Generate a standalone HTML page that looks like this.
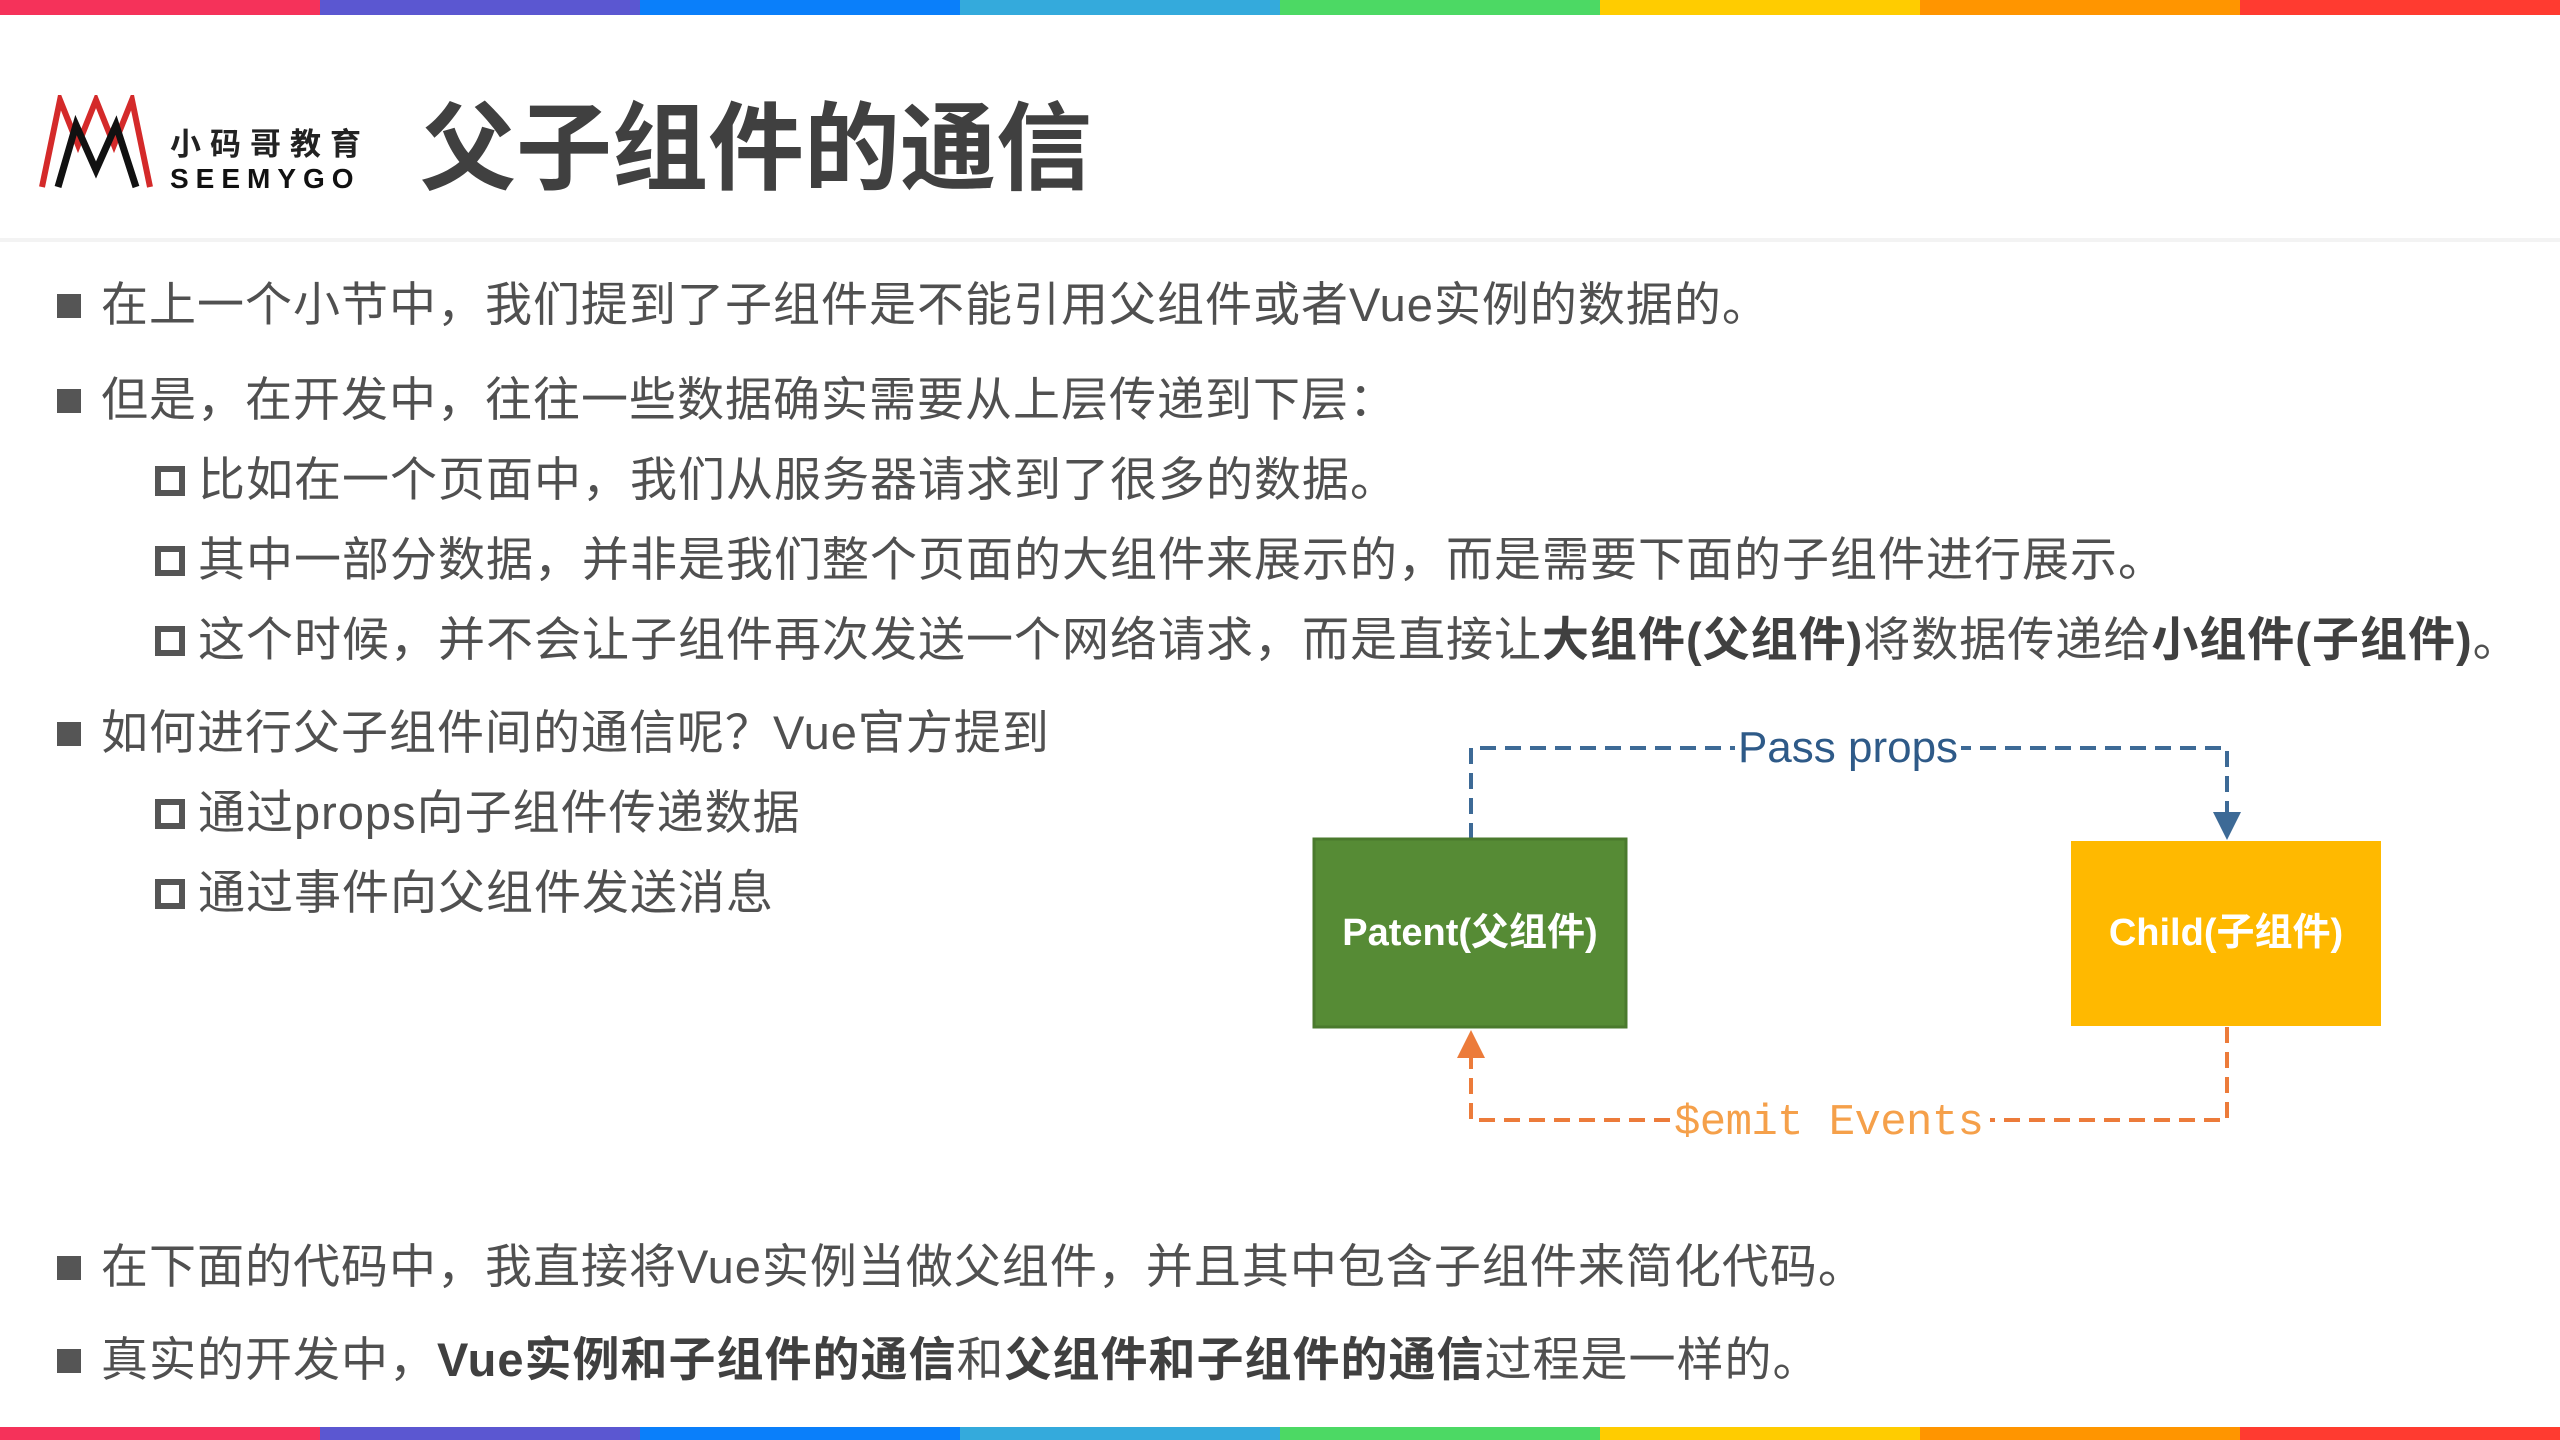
<!DOCTYPE html>
<html><head><meta charset="utf-8"><style>
*,*::before{margin:0;padding:0;box-sizing:border-box}
body{width:2560px;height:1440px;background:#fff;position:relative;overflow:hidden;font-family:"Liberation Sans","Noto Sans CJK SC",sans-serif;color:#505050}
.bar{position:absolute;left:0;width:2560px;height:15px;display:flex}
.bar div{flex:1}
.t{position:absolute;font-size:47px;line-height:60px;white-space:nowrap;letter-spacing:1px}
.b1::before{content:"";position:absolute;left:-44px;top:19px;width:24px;height:24px;background:#555}
.b2::before{content:"";position:absolute;left:-43px;top:16px;width:30px;height:30px;border:6px solid #555}
b{color:#404040;font-weight:bold}
</style></head><body>
<div class="bar" style="top:0"><div style="background:#f5325a"></div><div style="background:#5b57d1"></div><div style="background:#0a7ffa"></div><div style="background:#34aadc"></div><div style="background:#4cd964"></div><div style="background:#ffcc00"></div><div style="background:#ff9500"></div><div style="background:#ff3b30"></div></div>
<div class="bar" style="top:1427px;height:13px"><div style="background:#f5325a"></div><div style="background:#5b57d1"></div><div style="background:#0a7ffa"></div><div style="background:#34aadc"></div><div style="background:#4cd964"></div><div style="background:#ffcc00"></div><div style="background:#ff9500"></div><div style="background:#ff3b30"></div></div>

<svg style="position:absolute;left:38px;top:95px" width="130" height="100" viewBox="0 0 130 100">
<polyline points="4,92 22,5 40,50 58,5 76,50 94,5 112,92" fill="none" stroke="#d42a2a" stroke-width="6"/>
<polyline points="20,92 38,30 58,75 78,30 98,92" fill="none" stroke="#111" stroke-width="7"/>
</svg>
<div style="position:absolute;left:170px;top:128px;font-size:31px;line-height:34px;color:#222;letter-spacing:9px;font-weight:bold">小码哥教育</div>
<div style="position:absolute;left:170px;top:164px;font-size:28px;line-height:30px;color:#111;letter-spacing:7px;font-weight:bold">SEEMYGO</div>
<div style="position:absolute;left:420px;top:90px;font-size:96px;line-height:120px;font-weight:bold;color:#404040">父子组件的通信</div>
<div style="position:absolute;left:0;top:238px;width:2560px;height:4px;background:#f3f3f3"></div>

<div class="t b1" style="left:101px;top:275px">在上一个小节中，我们提到了子组件是不能引用父组件或者Vue实例的数据的。</div>
<div class="t b1" style="left:101px;top:370px">但是，在开发中，往往一些数据确实需要从上层传递到下层：</div>
<div class="t b2" style="left:198px;top:450px">比如在一个页面中，我们从服务器请求到了很多的数据。</div>
<div class="t b2" style="left:198px;top:530px">其中一部分数据，并非是我们整个页面的大组件来展示的，而是需要下面的子组件进行展示。</div>
<div class="t b2" style="left:198px;top:610px">这个时候，并不会让子组件再次发送一个网络请求，而是直接让<b>大组件(父组件)</b>将数据传递给<b>小组件(子组件)</b>。</div>
<div class="t b1" style="left:101px;top:703px">如何进行父子组件间的通信呢？Vue官方提到</div>
<div class="t b2" style="left:198px;top:783px">通过props向子组件传递数据</div>
<div class="t b2" style="left:198px;top:863px">通过事件向父组件发送消息</div>
<div class="t b1" style="left:101px;top:1237px">在下面的代码中，我直接将Vue实例当做父组件，并且其中包含子组件来简化代码。</div>
<div class="t b1" style="left:101px;top:1330px">真实的开发中，<b>Vue实例和子组件的通信</b>和<b>父组件和子组件的通信</b>过程是一样的。</div>

<svg style="position:absolute;left:0;top:0" width="2560" height="1440">
<path d="M1471 839 V748 H2227 V815" fill="none" stroke="#3d6a96" stroke-width="4" stroke-dasharray="16 9"/>
<polygon points="2213,812 2241,812 2227,840" fill="#3d6a96"/>
<path d="M2227 1027 V1120 H1471 V1058" fill="none" stroke="#ec7b3a" stroke-width="4" stroke-dasharray="16 9"/>
<polygon points="1457,1058 1485,1058 1471,1030" fill="#ec7b3a"/>
<rect x="1735" y="720" width="226" height="56" fill="#fff"/>
<text x="1848" y="762" text-anchor="middle" font-family="Liberation Sans" font-size="44" fill="#2e5a88">Pass props</text>
<rect x="1670" y="1090" width="320" height="60" fill="#fff"/>
<text x="1829" y="1134" text-anchor="middle" font-family="Liberation Mono" font-size="44" fill="#f5a04a" textLength="310">$emit Events</text>
<rect x="1314" y="839" width="312" height="188" fill="#568b35" stroke="#4a7a2d" stroke-width="3"/>
<rect x="2071" y="841" width="310" height="185" fill="#ffb900"/>
<text x="1470" y="945" text-anchor="middle" font-family="Liberation Sans,Noto Sans CJK SC" font-weight="bold" font-size="38" fill="#fff">Patent(父组件)</text>
<text x="2226" y="945" text-anchor="middle" font-family="Liberation Sans,Noto Sans CJK SC" font-weight="bold" font-size="38" fill="#fff">Child(子组件)</text>
</svg>
</body></html>
